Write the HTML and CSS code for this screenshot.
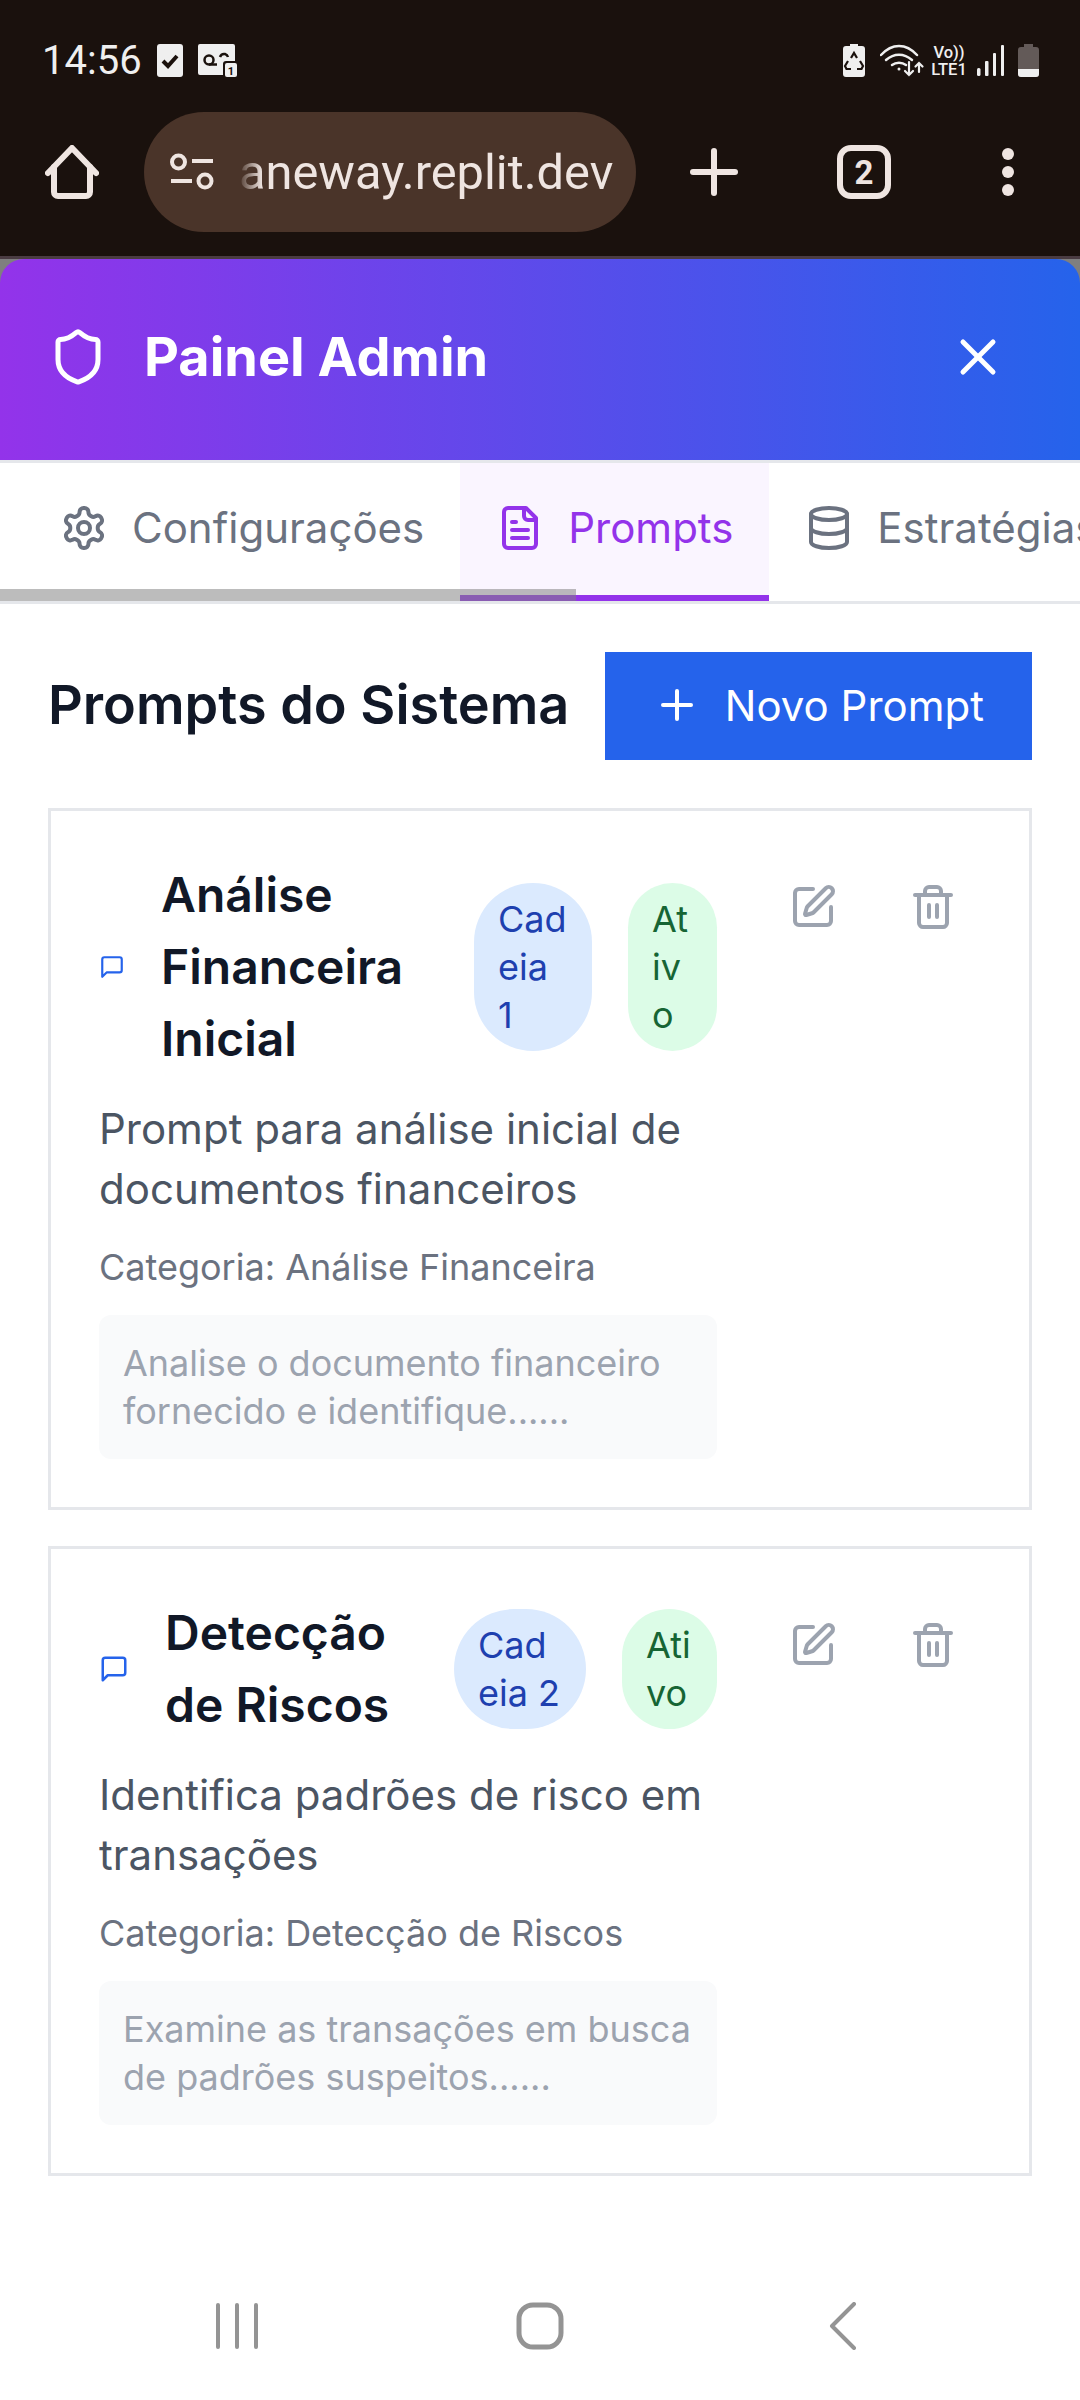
FILE: index.html
```html
<!DOCTYPE html>
<html lang="pt">
<head>
    <meta charset="UTF-8">
    <meta name="viewport" content="width=device-width, initial-scale=1.0">
    <title>Painel Admin</title>
    <link rel="stylesheet" href="styles.css">
</head>
<body>
    <svg class="sprite" aria-hidden="true">
        <symbol id="i-chat" viewBox="0 0 24 24"><path d="M21 15a2 2 0 0 1-2 2H7l-4 4V5a2 2 0 0 1 2-2h14a2 2 0 0 1 2 2z"/></symbol>
        <symbol id="i-edit" viewBox="0 0 24 24"><path d="M12 3H5a2 2 0 0 0-2 2v14a2 2 0 0 0 2 2h14a2 2 0 0 0 2-2v-7"/><path d="M18.375 2.625a1 1 0 0 1 3 3l-9.013 9.014a2 2 0 0 1-.853.505l-2.873.84a.5.5 0 0 1-.62-.62l.84-2.873a2 2 0 0 1 .506-.852z"/></symbol>
        <symbol id="i-trash" viewBox="0 0 24 24"><path d="M3 6h18"/><path d="M19 6v14c0 1-1 2-2 2H7c-1 0-2-1-2-2V6"/><path d="M8 6V4c0-1 1-2 2-2h4c1 0 2 1 2 2v2"/><path d="M10 11v6"/><path d="M14 11v6"/></symbol>
    </svg>

    <header class="browser">
        <div class="statusbar">
            <div class="status-left">
                <span class="time">14:56</span>
                <svg class="st-check" viewBox="0 0 26 33"><rect width="26" height="33" rx="3" fill="#efefef"/><path d="M6 17l5 5 9-10" fill="none" stroke="#1a110d" stroke-width="4"/></svg>
                <svg class="st-voicemail" viewBox="0 0 39 33">
                    <path d="M2 0h33a2 2 0 0 1 2 2v15h-9a3 3 0 0 0-3 3v11H2a2 2 0 0 1-2-2V2a2 2 0 0 1 2-2z" fill="#efefef"/>
                    <circle cx="11" cy="16" r="4.5" fill="none" stroke="#1a110d" stroke-width="2.5"/>
                    <path d="M11 20.500h8M22 13a4.500 4.500 0 0 1 5-3 4.500 4.500 0 0 1 3 3" fill="none" stroke="#1a110d" stroke-width="2.500"/>
                    <rect x="27" y="19" width="12" height="14" rx="2" fill="#efefef"/>
                    <text x="33" y="31" text-anchor="middle" class="st-mini">1</text>
                </svg>
            </div>
            <div class="status-right">
                <svg class="st-eco" viewBox="0 0 22 33">
                    <path d="M7 0h8v2h4a3 3 0 0 1 3 3v25a3 3 0 0 1-3 3H3a3 3 0 0 1-3-3V5a3 3 0 0 1 3-3h4z" fill="#efefef"/>
                    <path d="M8 14l3-5 3 5M17 17l3 5-1.500 3H14M5 17l-3 5 1.500 3H8" fill="none" stroke="#1a110d" stroke-width="2.200"/>
                </svg>
                <svg class="st-wifi" viewBox="0 0 45 33" fill="none" stroke="#efefef" stroke-linecap="round">
                    <path d="M1 11C12-1 26-1 37 11" stroke-width="2.500"/>
                    <path d="M6 16c8-7 18-7 26 0" stroke-width="2.500"/>
                    <path d="M12 21c4-3 10-3 14 0" stroke-width="2.500"/>
                    <circle cx="19" cy="25" r="1.500" fill="#efefef" stroke="none"/>
                    <path d="M29 18v13m-4-4 4 4 4-4" stroke-width="2.200"/>
                    <path d="M39 28V19m-3.500 3.500 3.500-3.500 3.500 3.500" stroke-width="2.200"/>
                </svg>
                <div class="st-volte"><span>Vo))</span><span>LTE1</span></div>
                <svg class="st-signal" viewBox="0 0 27 33" fill="#efefef">
                    <rect x="0" y="24" width="3.500" height="8" rx="1.500"/>
                    <rect x="8" y="17" width="3.500" height="15" rx="1"/>
                    <rect x="16" y="9" width="3" height="23" rx="1"/>
                    <rect x="24" y="1" width="3" height="31" rx="1"/>
                </svg>
                <svg class="st-battery" viewBox="0 0 21 33">
                    <path d="M6 0h9v3h3a3 3 0 0 1 3 3v24a3 3 0 0 1-3 3H3a3 3 0 0 1-3-3V6a3 3 0 0 1 3-3h3z" fill="#635a58"/>
                    <path d="M0 25h21v5a3 3 0 0 1-3 3H3a3 3 0 0 1-3-3z" fill="#efefef"/>
                </svg>
            </div>
        </div>
        <div class="toolbar">
            <svg class="tb-home" viewBox="0 0 54 54" fill="none" stroke="#efe5e1" stroke-width="6" stroke-linecap="round" stroke-linejoin="round">
                <path d="M3 28 27 3l24 25"/>
                <path d="M9 22v25a4 4 0 0 0 4 4h28a4 4 0 0 0 4-4V22"/>
            </svg>
            <div class="urlbar">
                <svg class="url-tune" viewBox="0 0 44 38" fill="none" stroke="#efe5e1" stroke-width="4">
                    <circle cx="8.500" cy="9" r="6.500"/>
                    <path d="M22 8h21"/>
                    <path d="M1 28h21"/>
                    <circle cx="35" cy="28" r="6.500"/>
                </svg>
                <span class="url-text">aneway.replit.dev</span>
            </div>
            <svg class="tb-plus" viewBox="0 0 48 48" fill="none" stroke="#efe5e1" stroke-width="6" stroke-linecap="round">
                <path d="M3 24h42"/>
                <path d="M24 3v42"/>
            </svg>
            <div class="tb-tabs">2</div>
            <svg class="tb-more" viewBox="0 0 12 48" fill="#efe5e1">
                <circle cx="6" cy="6" r="6"/>
                <circle cx="6" cy="24" r="6"/>
                <circle cx="6" cy="42" r="6"/>
            </svg>
        </div>
    </header>

    <div class="modal-top">
        <div class="modal-head">
            <div class="modal-title">
                <svg class="icon-head" viewBox="0 0 24 24"><path d="M20 13c0 5-3.500 7.500-7.660 8.950a1 1 0 0 1-.67-.01C7.500 20.500 4 18 4 13V6a1 1 0 0 1 1-1c2 0 4.500-1.200 6.240-2.720a1.170 1.170 0 0 1 1.520 0C14.510 3.810 17 5 19 5a1 1 0 0 1 1 1z"/></svg>
                <h2>Painel Admin</h2>
            </div>
            <svg class="icon-head" viewBox="0 0 24 24"><path d="M18 6 6 18"/><path d="m6 6 12 12"/></svg>
        </div>
    </div>

    <nav class="tabs">
        <div class="tab">
            <svg class="icon-tab" viewBox="0 0 24 24"><path d="M12.220 2h-.44a2 2 0 0 0-2 2v.18a2 2 0 0 1-1 1.730l-.43.25a2 2 0 0 1-2 0l-.15-.08a2 2 0 0 0-2.730.73l-.22.38a2 2 0 0 0 .73 2.730l.15.1a2 2 0 0 1 1 1.720v.51a2 2 0 0 1-1 1.740l-.15.09a2 2 0 0 0-.73 2.730l.22.38a2 2 0 0 0 2.730.73l.15-.08a2 2 0 0 1 2 0l.43.25a2 2 0 0 1 1 1.730V20a2 2 0 0 0 2 2h.44a2 2 0 0 0 2-2v-.18a2 2 0 0 1 1-1.730l.43-.25a2 2 0 0 1 2 0l.15.08a2 2 0 0 0 2.730-.73l.22-.39a2 2 0 0 0-.73-2.730l-.15-.08a2 2 0 0 1-1-1.740v-.5a2 2 0 0 1 1-1.740l.15-.09a2 2 0 0 0 .73-2.730l-.22-.38a2 2 0 0 0-2.730-.73l-.15.08a2 2 0 0 1-2 0l-.43-.25a2 2 0 0 1-1-1.730V4a2 2 0 0 0-2-2z"/><circle cx="12" cy="12" r="3"/></svg>
            Configurações
        </div>
        <div class="tab tab-active">
            <svg class="icon-tab" viewBox="0 0 24 24"><path d="M15 2H6a2 2 0 0 0-2 2v16a2 2 0 0 0 2 2h12a2 2 0 0 0 2-2V7Z"/><path d="M14 2v4a2 2 0 0 0 2 2h4"/><path d="M10 9H8"/><path d="M16 13H8"/><path d="M16 17H8"/></svg>
            Prompts
        </div>
        <div class="tab">
            <svg class="icon-tab" viewBox="0 0 24 24"><ellipse cx="12" cy="5" rx="9" ry="3"/><path d="M3 5V19A9 3 0 0 0 21 19V5"/><path d="M3 12A9 3 0 0 0 21 12"/></svg>
            Estratégias
        </div>
        <div class="tabs-scroll"></div>
    </nav>

    <main class="content">
        <div class="content-head">
            <h3>Prompts do Sistema</h3>
            <button class="btn-new">
                <svg class="icon-tab" viewBox="0 0 24 24"><path d="M5 12h14"/><path d="M12 5v14"/></svg>
                Novo Prompt
            </button>
        </div>

        <article class="card">
            <div class="card-main">
                <div class="card-head">
                    <svg class="icon-chat chat-sm"><use href="#i-chat"/></svg>
                    <h4 class="card-title">Análise Financeira Inicial</h4>
                    <span class="badge badge-blue chain-narrow">Cadeia 1</span>
                    <span class="badge badge-green active-narrow">Ativo</span>
                </div>
                <p class="card-desc">Prompt para análise inicial de documentos financeiros</p>
                <p class="card-cat">Categoria: Análise Financeira</p>
                <div class="card-preview">Analise o documento financeiro fornecido e identifique......</div>
            </div>
            <div class="card-actions">
                <span class="action"><svg class="icon-action"><use href="#i-edit"/></svg></span>
                <span class="action"><svg class="icon-action"><use href="#i-trash"/></svg></span>
            </div>
        </article>

        <article class="card">
            <div class="card-main">
                <div class="card-head">
                    <svg class="icon-chat chat-md"><use href="#i-chat"/></svg>
                    <h4 class="card-title">Detecção de Riscos</h4>
                    <span class="badge badge-blue chain-wide">Cadeia 2</span>
                    <span class="badge badge-green active-wide">Ativo</span>
                </div>
                <p class="card-desc">Identifica padrões de risco em transações</p>
                <p class="card-cat">Categoria: Detecção de Riscos</p>
                <div class="card-preview">Examine as transações em busca de padrões suspeitos......</div>
            </div>
            <div class="card-actions">
                <span class="action"><svg class="icon-action"><use href="#i-edit"/></svg></span>
                <span class="action"><svg class="icon-action"><use href="#i-trash"/></svg></span>
            </div>
        </article>
    </main>

    <footer class="navbar">
        <svg class="nav-icon" viewBox="0 0 44 48" fill="none" stroke="#949494" stroke-width="4" stroke-linecap="round">
            <path d="M3 3v42"/>
            <path d="M22 3v42"/>
            <path d="M41 3v42"/>
        </svg>
        <svg class="nav-icon" viewBox="0 0 48 48" fill="none" stroke="#949494" stroke-width="5">
            <rect x="3" y="3" width="42" height="42" rx="14"/>
        </svg>
        <svg class="nav-icon" viewBox="0 0 28 48" fill="none" stroke="#949494" stroke-width="4" stroke-linecap="round" stroke-linejoin="round">
            <path d="M25 2 3 24l22 22"/>
        </svg>
    </footer>
</body>
</html>
```

FILE: styles.css
```css
* {
    box-sizing: border-box;
}

body {
    margin: 0;
    width: 1080px;
    height: 2400px;
    display: flex;
    flex-direction: column;
    overflow: hidden;
    background-color: #fff;
    font-family: 'Inter', 'Liberation Sans', sans-serif;
}

.sprite {
    display: none;
}

/* Browser chrome */
.browser {
    height: 259px;
    background-color: #1a110d;
    border-bottom: 3px solid #4a3c42;
    font-family: 'Roboto', sans-serif;
}

.statusbar {
    height: 112px;
    padding: 44px 41px 0 42px;
    display: flex;
    justify-content: space-between;
    align-items: flex-start;
}

.status-left,
.status-right {
    display: flex;
    align-items: flex-start;
}

.time {
    color: #efefef;
    font-size: 40px;
    line-height: 33px;
    width: 115px;
    font-weight: 400;
}

.st-check {
    width: 26px;
    height: 33px;
}

.st-voicemail {
    width: 39px;
    height: 33px;
    margin-left: 15px;
}

.st-mini {
    font-size: 11px;
    font-weight: 700;
    fill: #1a110d;
    font-family: 'Roboto', sans-serif;
}

.st-eco {
    width: 22px;
    height: 33px;
}

.st-wifi {
    width: 45px;
    height: 33px;
    margin-left: 15px;
}

.st-volte {
    width: 38px;
    margin-left: 5px;
    display: flex;
    flex-direction: column;
    align-items: center;
    color: #efefef;
    font-size: 16.500px;
    line-height: 17px;
    font-weight: 500;
    white-space: nowrap;
}

.st-signal {
    width: 27px;
    height: 33px;
    margin-left: 9px;
}

.st-battery {
    width: 21px;
    height: 33px;
    margin-left: 14px;
}

.toolbar {
    display: flex;
    align-items: center;
    height: 120px;
    padding-left: 45px;
}

.tb-home {
    width: 54px;
    height: 54px;
}

.urlbar {
    position: relative;
    width: 492px;
    height: 120px;
    margin-left: 45px;
    padding-left: 26px;
    display: flex;
    align-items: center;
    background-color: #4a3429;
    border-radius: 60px;
}

.url-tune {
    width: 44px;
    height: 38px;
    flex-shrink: 0;
}

.url-text {
    margin-left: 25px;
    color: #efe5e1;
    font-size: 48.800px;
    white-space: nowrap;
}

/* the host name fades out under the icon */
.urlbar::after {
    content: "";
    position: absolute;
    left: 94px;
    top: 30px;
    width: 24px;
    height: 60px;
    background: linear-gradient(to right, #4a3429, rgba(74, 52, 41, 0));
}

.tb-plus {
    width: 48px;
    height: 48px;
    margin-left: 54px;
}

.tb-tabs {
    width: 54px;
    height: 54px;
    margin-left: 99px;
    display: flex;
    align-items: center;
    justify-content: center;
    border: 6px solid #efe5e1;
    border-radius: 14px;
    color: #efe5e1;
    font-size: 33px;
    font-weight: 700;
}

.tb-more {
    width: 12px;
    height: 48px;
    margin-left: 111px;
}

/* Modal header */
.modal-top {
    background-color: #7f7f7f;
}

.modal-head {
    height: 201px;
    padding: 0 72px 6px 48px;
    display: flex;
    align-items: center;
    justify-content: space-between;
    background: linear-gradient(to right, #9333ea, #2563eb);
    border-radius: 24px 24px 0 0;
}

.modal-title {
    display: flex;
    align-items: center;
    gap: 36px;
}

.modal-title h2 {
    margin: 0;
    color: #fff;
    font-size: 54px;
    font-weight: 700;
}

.icon-head {
    width: 60px;
    height: 60px;
    fill: none;
    stroke: #fff;
    stroke-width: 2;
    stroke-linecap: round;
    stroke-linejoin: round;
}

/* Tabs */
.tabs {
    position: relative;
    height: 144px;
    padding-left: 24px;
    display: flex;
    overflow: hidden;
    border-top: 3px solid #e5e7eb;
    border-bottom: 3px solid #e5e7eb;
}

.tab {
    height: 138px;
    padding: 0 36px 9px;
    display: flex;
    align-items: center;
    gap: 24px;
    flex-shrink: 0;
    color: #6b7280;
    font-size: 42px;
    white-space: nowrap;
}

.tab-active {
    padding-bottom: 3px;
    color: #9333ea;
    background-color: #faf5ff;
    border-bottom: 6px solid #9333ea;
}

.tabs-scroll {
    position: absolute;
    left: 0;
    bottom: 0;
    width: 576px;
    height: 12px;
    background-color: rgba(128, 128, 128, 0.53);
}

.icon-tab {
    width: 48px;
    height: 48px;
    flex-shrink: 0;
    fill: none;
    stroke: currentColor;
    stroke-width: 2;
    stroke-linecap: round;
    stroke-linejoin: round;
}

/* Content */
.content {
    flex: 1;
    padding: 48px 48px 0;
}

.content-head {
    display: flex;
    align-items: center;
    justify-content: space-between;
    margin-bottom: 48px;
}

.content-head h3 {
    margin: 0;
    padding-bottom: 4px;
    color: #111827;
    font-size: 54px;
    font-weight: 600;
}

.btn-new {
    height: 108px;
    padding: 0 48px 2px;
    display: flex;
    align-items: center;
    gap: 24px;
    border: none;
    background-color: #2563eb;
    color: #fff;
    font-family: inherit;
    font-size: 42px;
}

.card {
    display: flex;
    gap: 48px;
    padding: 48px;
    margin-bottom: 36px;
    border: 3px solid #e5e7eb;
    background-color: #fff;
}

.card-main {
    flex: 1;
    min-width: 0;
}

.card-head {
    display: flex;
    align-items: center;
    gap: 36px;
    margin-bottom: 24px;
}

.icon-chat {
    flex-shrink: 0;
    fill: none;
    stroke: #2563eb;
    stroke-width: 2;
    stroke-linecap: round;
    stroke-linejoin: round;
}

.chat-sm {
    width: 26px;
    height: 26px;
}

.chat-md {
    width: 30px;
    height: 30px;
}

.card-title {
    flex: 1;
    min-width: 0;
    margin: 0;
    color: #111827;
    font-size: 48px;
    line-height: 72px;
    font-weight: 600;
}

.badge {
    flex-shrink: 0;
    padding: 12px 24px;
    border-radius: 9999px;
    font-size: 36px;
    line-height: 48px;
    word-break: break-all;
}

.badge-blue {
    background-color: #dbeafe;
    color: #1e40af;
}

.badge-green {
    background-color: #dcfce7;
    color: #166534;
}

.chain-narrow {
    width: 118px;
}

.active-narrow {
    width: 89px;
}

.chain-wide {
    width: 132px;
}

.active-wide {
    width: 95px;
}

.card-desc {
    margin: 0 0 24px;
    color: #4b5563;
    font-size: 42px;
    line-height: 60px;
}

.card-cat {
    margin: 0 0 24px;
    color: #6b7280;
    font-size: 36px;
    line-height: 48px;
}

.card-preview {
    padding: 24px;
    border-radius: 12px;
    background-color: #f9fafb;
    color: #9ca3af;
    font-size: 36px;
    line-height: 48px;
}

.card-actions {
    display: flex;
    align-items: flex-start;
    gap: 24px;
}

.action {
    display: flex;
    padding: 24px;
}

.icon-action {
    width: 48px;
    height: 48px;
    fill: none;
    stroke: #9ca3af;
    stroke-width: 2;
    stroke-linecap: round;
    stroke-linejoin: round;
}

/* Android nav bar */
.navbar {
    height: 143px;
    padding: 45px 0 0;
    display: grid;
    grid-template-columns: repeat(3, 303px);
    justify-content: center;
    justify-items: center;
    align-items: start;
}

.nav-icon {
    height: 48px;
    width: auto;
}
```
